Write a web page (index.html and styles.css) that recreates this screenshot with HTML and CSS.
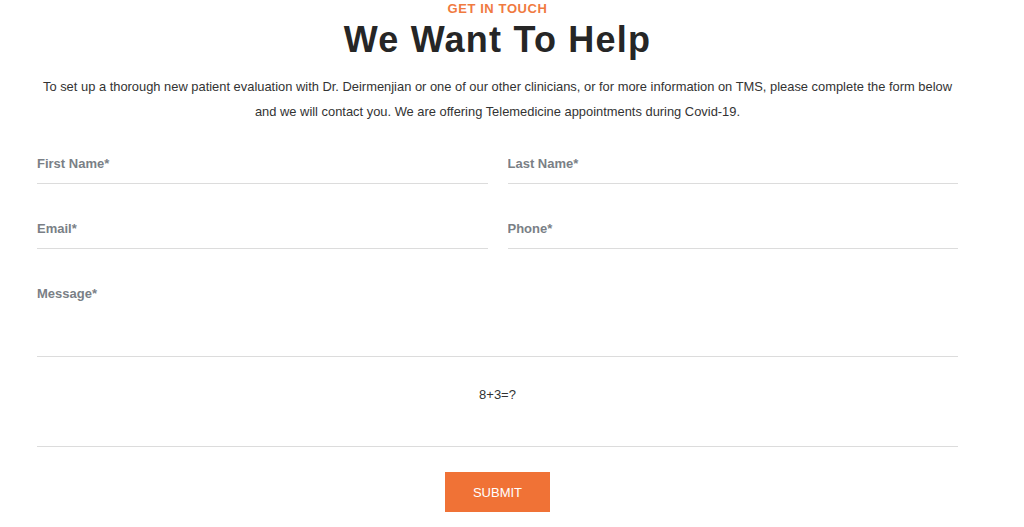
FILE: index.html
```html
<!DOCTYPE html>
<html lang="en">
    <head>
        <meta charset="utf-8">
        <title>Contact</title>
        <link rel="stylesheet" href="styles.css">
    </head>
    <body>
        <section class="contact">
            <div class="eyebrow">GET IN TOUCH</div>
            <h1 class="title">We Want To Help</h1>
            <p class="intro">
                To set up a thorough new patient evaluation with Dr. Deirmenjian or one of our other clinicians, or for more information on TMS, please complete the form below
                and we will contact you. We are offering Telemedicine appointments during Covid-19.
            </p>
            <form class="contact-form">
                <div class="row">
                    <input class="field" type="text" placeholder="First Name*">
                    <input class="field" type="text" placeholder="Last Name*">
                </div>
                <div class="row">
                    <input class="field" type="email" placeholder="Email*">
                    <input class="field" type="tel" placeholder="Phone*">
                </div>
                <textarea class="field message" placeholder="Message*"></textarea>
                <div class="captcha">8+3=?</div>
                <div class="actions">
                    <button class="submit" type="button">SUBMIT</button>
                </div>
            </form>
        </section>
    </body>
</html>
```

FILE: styles.css
```css
* {
    box-sizing: border-box;
}

body {
    margin: 0;
    background: #ffffff;
    font-family: "Liberation Sans", Arial, sans-serif;
    color: #333333;
}

.contact {
    width: 921px;
    margin-left: 37px;
    padding-top: 1px;
}

.eyebrow {
    text-align: center;
    color: #f07a3f;
    font-size: 13px;
    font-weight: bold;
    letter-spacing: 0.6px;
    line-height: 16px;
}

.title {
    margin: 3px 0 0;
    text-align: center;
    font-size: 36px;
    line-height: 40px;
    font-weight: bold;
    color: #262626;
    letter-spacing: 1.2px;
}

.intro {
    margin: 14px 0 0;
    text-align: center;
    font-size: 12.9px;
    line-height: 25px;
    color: #333333;
}

.contact-form {
    margin-top: 20px;
}

.row {
    display: flex;
    gap: 20px;
    margin-bottom: 25px;
}

.field {
    display: block;
    width: 100%;
    height: 40px;
    padding: 0;
    border: none;
    border-bottom: 1px solid #dcdcdc;
    outline: none;
    font-family: "Liberation Sans", Arial, sans-serif;
    font-size: 13px;
    color: #333333;
    background: transparent;
}

.row .field {
    flex: 1;
}

.field::placeholder {
    color: #7a7f86;
    font-weight: bold;
    opacity: 1;
}

.message {
    height: 83px;
    padding-top: 12px;
    resize: none;
}

.captcha {
    height: 90px;
    padding-top: 30px;
    text-align: center;
    font-size: 13px;
    border-bottom: 1px solid #dcdcdc;
}

.actions {
    display: flex;
    justify-content: center;
    margin-top: 25px;
}

.submit {
    width: 105px;
    height: 40px;
    border: none;
    background: #f07236;
    color: #ffffff;
    font-family: "Liberation Sans", Arial, sans-serif;
    font-size: 13px;
}
```
